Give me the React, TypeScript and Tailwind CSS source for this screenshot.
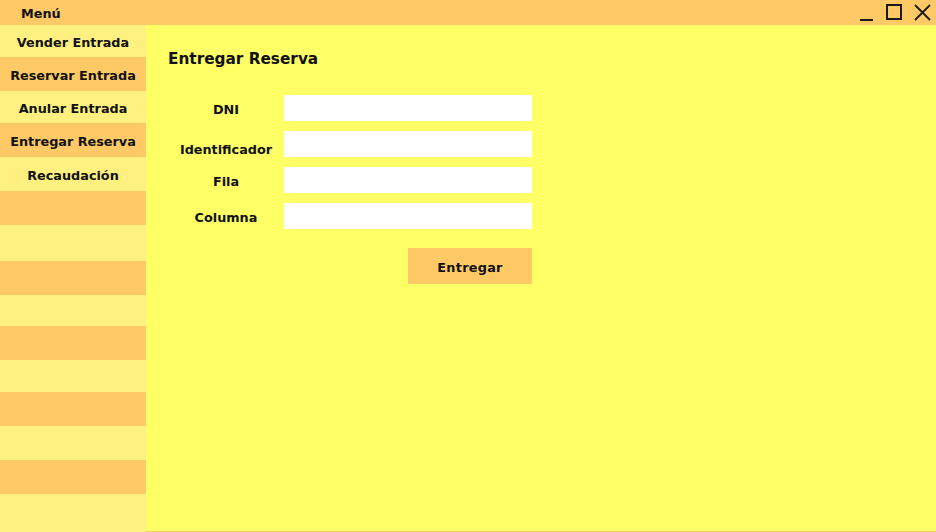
import React from 'react';

const menuItems = ['Vender Entrada', 'Reservar Entrada', 'Anular Entrada', 'Entregar Reserva', 'Recaudación'];

// alternating row heights taken from the sidebar stripes
const rowHeights = [32, 34, 32, 34, 34, 34, 36, 34, 31, 34, 32, 34, 34, 34, 38];

const fields = [
  { label: 'DNI', labelPad: 'pt-[4px]' },
  { label: 'Identificador', labelPad: 'pt-[11px]' },
  { label: 'Fila', labelPad: 'pt-[4px]' },
  { label: 'Columna', labelPad: 'pt-[4px]' },
];

const App: React.FC = () => {
  return (
    <div
      className="w-[936px] h-[532px] flex flex-col bg-[#FFC966] overflow-hidden text-[#111]"
      style={{ fontFamily: '"DejaVu Sans", Verdana, sans-serif' }}
    >
      {/* title bar */}
      <div className="h-[25px] flex items-center shrink-0">
        <span className="ml-[21px] pt-[3px] text-[12.8px] font-bold">Menú</span>
        <div className="ml-auto flex items-center mr-[5px] gap-[12px] h-full">
          <svg width="14" height="25" viewBox="0 0 14 25">
            <rect x="0" y="19" width="13" height="2" fill="#1a1a1a" />
          </svg>
          <svg width="16" height="25" viewBox="0 0 16 25">
            <rect x="1" y="5" width="14" height="14" fill="none" stroke="#1a1a1a" strokeWidth="2" />
          </svg>
          <svg width="17" height="25" viewBox="0 0 17 25">
            <path d="M1 5 L16 20 M16 5 L1 20" stroke="#1a1a1a" strokeWidth="1.8" />
          </svg>
        </div>
      </div>

      <div className="flex flex-1 min-h-0">
        {/* sidebar */}
        <div className="w-[146px] flex flex-col shrink-0">
          {rowHeights.map((h, i) => (
            <div
              key={i}
              className={`flex items-center justify-center pt-[3px] text-[12.8px] font-bold ${i % 2 === 0 ? 'bg-[#FFF080]' : 'bg-[#FFC966]'}`}
              style={{ height: h }}
            >
              {menuItems[i] ?? ''}
            </div>
          ))}
        </div>

        {/* main panel */}
        <div className="flex-1 flex flex-col">
          <div className="flex-1 bg-[#FFFF66] pl-[22px] pt-[23px]">
            <h1 className="text-[15.3px] font-bold leading-[22px]">Entregar Reserva</h1>

            <div className="mt-[25px] flex flex-col gap-[10px]">
              {fields.map(f => (
                <div key={f.label} className="flex h-[26px]">
                  <div className={`w-[116px] h-full flex items-center justify-center text-[12.8px] font-bold ${f.labelPad}`}>
                    {f.label}
                  </div>
                  <input className="w-[248px] h-full bg-white outline-none border-none px-1 text-[13px]" />
                </div>
              ))}
            </div>

            <div className="w-[364px] flex justify-end mt-[19px]">
              <button className="w-[124px] h-[36px] bg-[#FFC966] pt-[3px] text-[12.8px] font-bold tracking-[0.3px]">
                Entregar
              </button>
            </div>
          </div>
          <div className="h-px bg-[#FFC966]" />
        </div>
      </div>
    </div>
  );
};

export default App;
